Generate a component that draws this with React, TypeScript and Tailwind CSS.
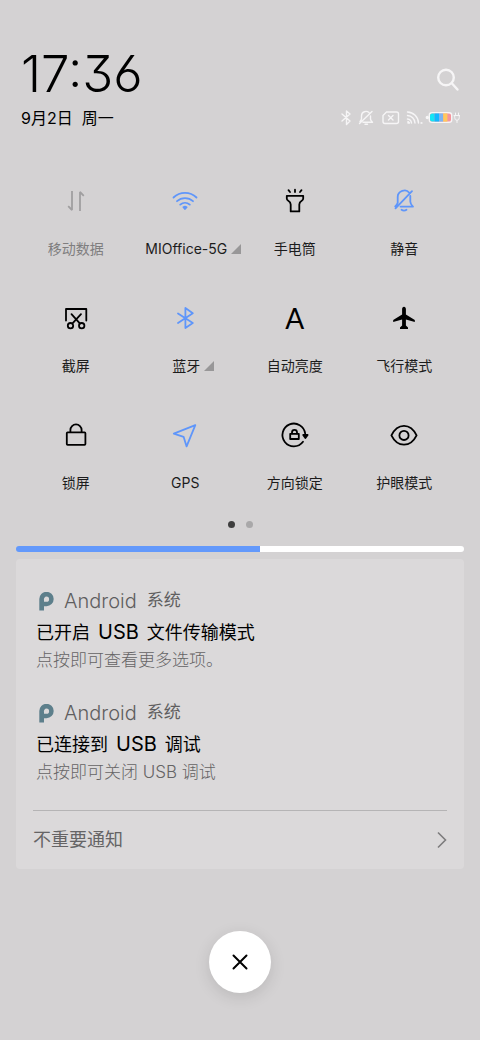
import { useState } from "react";
import type { ReactNode } from "react";

type Tile = {
  id: string;
  label: string;
  state: "on" | "off" | "disabled";
  more?: boolean;
  icon: ReactNode;
};

const tileColors = {
  on: "text-[#5f96fa]",
  off: "text-black",
  disabled: "text-[#a09fa0]",
};

function Icon({ children }: { children: ReactNode }) {
  return (
    <svg
      viewBox="-14 -14 28 28"
      className="h-7 w-7 overflow-visible"
      fill="none"
      stroke="currentColor"
      strokeWidth="1.8"
      strokeLinecap="round"
      strokeLinejoin="round"
      aria-hidden="true"
    >
      {children}
    </svg>
  );
}

const tiles: Tile[] = [
  {
    id: "data",
    label: "移动数据",
    state: "disabled",
    icon: (
      <Icon>
        <path d="M-4 -10V9L-7.8 5.2M4 10V-9L7.8 -5.2" strokeLinecap="butt" strokeLinejoin="bevel" />
      </Icon>
    ),
  },
  {
    id: "wifi",
    label: "MIOffice-5G",
    state: "on",
    more: true,
    icon: (
      <Icon>
        <path d="M-11.5 -3.5C-5 -9.8 5 -9.8 11.5 -3.5M-8 0.2C-3.5 -4 3.5 -4 8 0.2M-4.8 3.6C-2 1.2 2 1.2 4.8 3.6" />
        <path d="M-1.6 6.2Q0 5.2 1.6 6.2L0 8Z" fill="currentColor" />
      </Icon>
    ),
  },
  {
    id: "torch",
    label: "手电筒",
    state: "off",
    icon: (
      <Icon>
        <path d="M-8.2 -5.2H8.2V-2.6Q8.2 -1.4 7 -0.6Q4.3 1 4.3 3.5V10.4H-4.3V3.5Q-4.3 1 -7 -0.6Q-8.2 -1.4 -8.2 -2.6Z" />
        <path d="M0 -11.3V-9M-6.5 -10.8L-5 -9M6.5 -10.8L5 -9" />
      </Icon>
    ),
  },
  {
    id: "mute",
    label: "静音",
    state: "on",
    icon: (
      <Icon>
        <path d="M-8.5 7.3L8 -9.8M-6.3 2V-4C-6.3 -10 2 -12.8 5 -8.4M6.3 -5V0.5Q6.3 3 9 5.6H-3.5M-8.8 5.4Q-7 3.9 -6.4 2" />
        <path d="M-2.5 8.8Q0 10.6 2.5 8.8" />
      </Icon>
    ),
  },
  {
    id: "screenshot",
    label: "截屏",
    state: "off",
    icon: (
      <Icon>
        <path d="M-10 2.5V-9H10.3V2.5" />
        <path d="M-4.5 -3.8L3.8 5.3M5 -3.8L-3.5 5.3" />
        <circle cx="-5.5" cy="7.7" r="2.7" />
        <circle cx="5.7" cy="7.7" r="2.7" />
      </Icon>
    ),
  },
  {
    id: "bluetooth",
    label: "蓝牙",
    state: "on",
    more: true,
    icon: (
      <Icon>
        <path d="M-7 -4.5L7.8 5L0.4 10V-10L7.8 -4.8L-7 5" />
      </Icon>
    ),
  },
  {
    id: "brightness",
    label: "自动亮度",
    state: "off",
    icon: <span className="font-['Lato',sans-serif] text-[28px] leading-7">A</span>,
  },
  {
    id: "airplane",
    label: "飞行模式",
    state: "off",
    icon: (
      <Icon>
        <path
          d="M0 -11.3C1.2 -11.3 1.9 -10.3 1.9 -9V-3.4L10.8 1.9V3.9L1.9 1.4V7.6L4 9.4V10.9H-4V9.4L-1.9 7.6V1.4L-10.8 3.9V1.9L-1.9 -3.4V-9C-1.9 -10.3 -1.2 -11.3 0 -11.3Z"
          fill="currentColor"
          stroke="none"
        />
      </Icon>
    ),
  },
  {
    id: "lock",
    label: "锁屏",
    state: "off",
    icon: (
      <Icon>
        <rect x="-9.2" y="-2.6" width="18.6" height="12.4" rx="0.8" />
        <path d="M-5.6 -2.8V-5A5.6 5.6 0 0 1 5.6 -5V-2.8" />
      </Icon>
    ),
  },
  {
    id: "gps",
    label: "GPS",
    state: "on",
    icon: (
      <Icon>
        <path d="M10.3 -9.8L-11.2 -1.4L-1.4 1.8L1.6 11.4Z" />
      </Icon>
    ),
  },
  {
    id: "rotation",
    label: "方向锁定",
    state: "off",
    icon: (
      <Icon>
        <path d="M8 6.8A11.4 11.4 0 1 1 10.2 -1.3" />
        <path d="M8.2 0H12.6L10.4 3Z" fill="currentColor" />
        <rect x="-4.8" y="-1.2" width="8.6" height="5.2" />
        <path d="M-3 -1.6V-2.6A2.5 2.5 0 0 1 2 -2.6V-1.6" />
      </Icon>
    ),
  },
  {
    id: "eye",
    label: "护眼模式",
    state: "off",
    icon: (
      <Icon>
        <path d="M-12.6 0.4C-6.5 -12.4 6.5 -12.4 12.6 0.4C6.5 12.8 -6.5 12.8 -12.6 0.4Z" />
        <circle cy="0.4" r="4.6" />
      </Icon>
    ),
  },
];

const notifications = [
  { id: 1, title: ["已开启", "USB", "文件传输模式"], body: "点按即可查看更多选项。" },
  { id: 2, title: ["已连接到", "USB", "调试"], body: "点按即可关闭 USB 调试" },
];

function StatusIcons() {
  return (
    <svg
      viewBox="0 0 120 18"
      className="h-[18px] w-[120px] text-[#f6f5f6]"
      fill="none"
      stroke="currentColor"
      strokeWidth="1.4"
      strokeLinecap="round"
      strokeLinejoin="round"
      aria-hidden="true"
    >
      {/* bluetooth */}
      <path d="M2 5L10 12L6.5 15.5V2L10 5L2 12" />
      {/* muted bell */}
      <path d="M19.5 14.5L32 2.5M21.5 9.5V7C21.5 2.5 26.5 1.3 29 3.5M30.5 7V10Q30.5 11.5 32.5 13.3H23M20 12.5Q21.4 11.1 21.5 9.5M25 15.3H27.5" />
      {/* no sim */}
      <path d="M46.5 3H56.5Q58.5 3 58.5 5V12.5Q58.5 14.5 56.5 14.5H45Q43 14.5 43 12.5V6.5Z" />
      <path d="M48.5 6.5L53 11M53 6.5L48.5 11" />
      {/* signal */}
      <path d="M67.5 3A11.5 11.5 0 0 1 78.5 14M67.5 6.5A8 8 0 0 1 75 14M67.5 10A4.5 4.5 0 0 1 71.5 14" />
      <path d="M68 12.5V14H69.5Z" fill="currentColor" />
      <circle cx="81.5" cy="14" r="0.4" />
      {/* battery */}
      <circle cx="87.3" cy="8.5" r="1" fill="currentColor" />
      <rect x="89.3" y="3.7" width="22.4" height="9.6" rx="2.6" fill="#f5949c" />
      <path d="M92.2 4.4H94.5V12.6H92.2Q90 12.6 90 10.5V6.5Q90 4.4 92.2 4.4Z" fill="#14e6f5" stroke="none" />
      <path d="M94.5 4.4H99V12.6H94.5Z" fill="#12b8ff" stroke="none" />
      <path d="M99 4.4H103.2V12.6H99Z" fill="#7db4f2" stroke="none" />
      <path d="M103.2 4.4H107.4V12.6H103.2Z" fill="#ffc95e" stroke="none" />
      {/* plug */}
      <path d="M114 6.5H120M114.7 6.5V8.5A2.3 2.8 0 0 0 119.3 8.5V6.5M115.5 4V6M118.5 4V6M117 11.5V13.5" strokeWidth="1" />
    </svg>
  );
}

function AppLogo() {
  return (
    <svg viewBox="0 0 15 19" className="h-[19px] w-[15px]" fill="none" aria-hidden="true">
      <path
        d="M0.3 7.2A7.2 7.2 0 1 1 7.5 14.2H5V18.4H0.3ZM7.5 4.6A2.6 2.6 0 0 0 5 7.9V9.8H7.5A2.6 2.6 0 0 0 7.5 4.6Z"
        fill="#5d7f8b"
        fillRule="evenodd"
      />
    </svg>
  );
}

export default function App() {
  const [brightness, setBrightness] = useState(54.5);

  return (
    <main className="min-h-screen bg-[#d4d2d3] px-4 pt-12 pb-12 font-['Inter','Noto_Sans_CJK_SC',sans-serif] text-black">
      {/* Clock and status */}
      <header className="pl-[5px]">
        <div className="flex items-center justify-between">
          <h1 className="text-[51px] leading-[52px] font-light [font-feature-settings:'ss01','cv09']">17:36</h1>
          <button type="button" aria-label="搜索" className="mt-3 mr-1">
            <svg viewBox="0 0 24 24" className="h-6 w-6" fill="none" stroke="#f6f5f6" strokeWidth="2.4" strokeLinecap="round" aria-hidden="true">
              <circle cx="10" cy="9.5" r="7.8" />
              <path d="M15.8 15.3L21.5 21.5" />
            </svg>
          </button>
        </div>
        <div className="mt-[6px] flex h-6 items-center justify-between pr-1">
          <p className="text-base whitespace-pre">9月2日  周一</p>
          <StatusIcons />
        </div>
      </header>

      {/* Toggles */}
      <section className="mt-[57px] grid grid-cols-4 gap-y-[45px] px-[5px]">
        {tiles.map((tile) => (
          <button key={tile.id} type="button" className="flex flex-col items-center gap-6">
            <span className={`flex h-7 items-center ${tileColors[tile.state]}`}>{tile.icon}</span>
            <span
              className={`flex h-5 items-center gap-1 text-sm whitespace-nowrap ${
                tile.state === "disabled" ? "text-[#7f7e7f]" : "text-[#1c1c1c]"
              } ${tile.more ? "pl-4" : ""}`}
            >
              {tile.label}
              {tile.more && (
                <svg viewBox="0 0 10 10" className="h-[10px] w-[10px] text-[#989798]" aria-hidden="true">
                  <path d="M10 0V10H0Z" fill="currentColor" />
                </svg>
              )}
            </span>
          </button>
        ))}
      </section>

      {/* Pages */}
      <div className="mt-7 flex justify-center gap-[11px]">
        <span className="h-[7px] w-[7px] rounded-full bg-[#3e3e3e]" />
        <span className="h-[7px] w-[7px] rounded-full bg-[#a9a8a9]" />
      </div>

      {/* Brightness */}
      <input
        type="range"
        aria-label="亮度"
        min={0}
        max={100}
        step={0.5}
        value={brightness}
        onChange={(e) => setBrightness(Number(e.target.value))}
        style={{ backgroundImage: `linear-gradient(to right, #6399fb ${brightness}%, #ffffff ${brightness}%)` }}
        className="mt-[18px] block h-[6px] w-full appearance-none rounded-full [&::-webkit-slider-thumb]:h-[6px] [&::-webkit-slider-thumb]:w-1 [&::-webkit-slider-thumb]:appearance-none"
      />

      {/* Notifications */}
      <section className="mt-[7px] rounded bg-[#dbd9da] px-[17px] pt-[26px]">
        <div className="flex flex-col gap-[26px] px-[3px]">
          {notifications.map((item) => (
            <article key={item.id}>
              <div className="flex h-8 items-center gap-[10px] pl-[3px] text-[#5f5e5f]">
                <AppLogo />
                <span className="text-[20px] font-light">Android</span>
                <span className="text-[17px]">系统</span>
              </div>
              <h2 className="flex h-8 items-center gap-2 text-lg">
                <span>{item.title[0]}</span>
                <span className="text-[20px]">{item.title[1]}</span>
                <span>{item.title[2]}</span>
              </h2>
              <p className="text-[17px] leading-[22px] font-light text-[#656465]">{item.body}</p>
            </article>
          ))}
        </div>
        <button
          type="button"
          className="mt-[27px] flex h-[59px] w-full items-center justify-between border-t border-[#b5b4b5] text-lg text-[#656465]"
        >
          不重要通知
          <svg viewBox="0 0 10 18" className="h-[18px] w-[10px]" fill="none" stroke="#7d7c7d" strokeWidth="1.6" aria-hidden="true">
            <path d="M1 1.5L8.5 9L1 16.5" />
          </svg>
        </button>
      </section>

      {/* Close */}
      <div className="mt-[62px] flex justify-center">
        <button
          type="button"
          aria-label="关闭"
          className="flex h-[62px] w-[62px] items-center justify-center rounded-full bg-white shadow-[0_4px_16px_rgba(0,0,0,0.12)]"
        >
          <svg viewBox="0 0 16 16" className="h-4 w-4" fill="none" stroke="black" strokeWidth="2" strokeLinecap="round" aria-hidden="true">
            <path d="M1.5 1.5L14.5 14.5M14.5 1.5L1.5 14.5" />
          </svg>
        </button>
      </div>
    </main>
  );
}
